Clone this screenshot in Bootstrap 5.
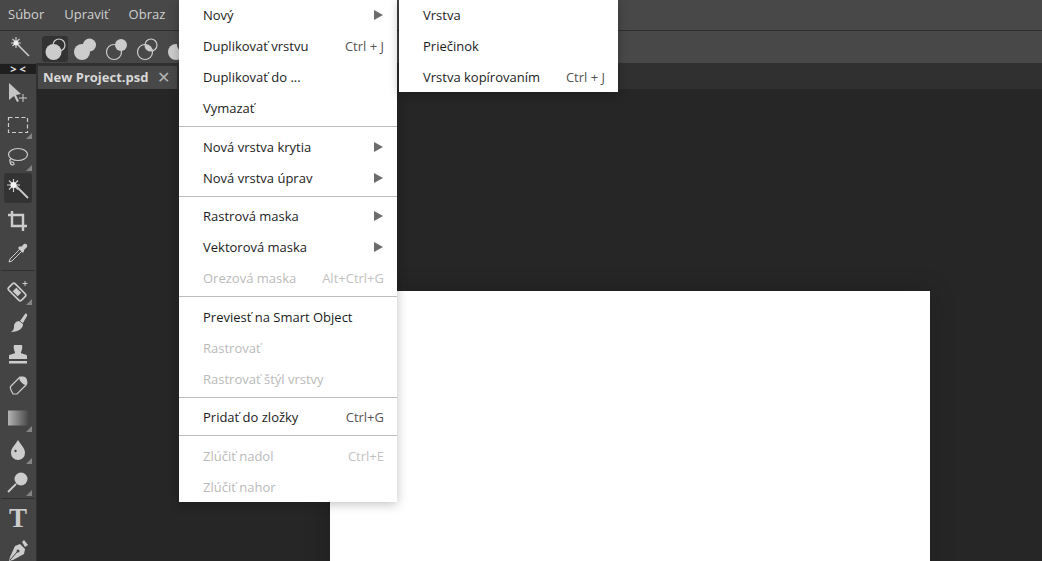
<!doctype html>
<html lang="sk"><head><meta charset="utf-8">
<link href="https://cdn.jsdelivr.net/npm/bootstrap@5.3.0/dist/css/bootstrap.min.css" rel="stylesheet">
<style>
html,body{height:100%;margin:0;overflow:hidden}
body{background:#262626;font-family:"Open Sans",sans-serif;font-size:13px;color:#111;position:relative}
.shell{height:561px;width:1042px;overflow:hidden}
.menubar{height:31px;background:#484848;border-bottom:1px solid #2e2e2e;color:#d0d0d0;padding-left:8px;gap:20px;line-height:29px;font-size:13px}
.optbar{height:32px;background:#484848;gap:5px;padding:4px 0 0 11px}
.optic{width:26px;height:26px;border-radius:3px;flex:none}
.optic.on{background:#333}
.optic svg{display:block}
.workrow{height:498px}
.lefttools{width:37px;background:#444;border-right:1px solid #303030;flex:none;padding-top:1px}
.arrows{height:10px;background:#1f1f1f;color:#e8e8e8;font-size:11px;line-height:9px;font-weight:700;text-align:center;letter-spacing:3px;padding-left:3px;margin-bottom:5px}
.toolslot{width:28px;height:28px;margin:0 auto 4px;border-radius:3px;display:flex;align-items:center;justify-content:center;position:relative}
.toolsep ~ .toolslot{margin-bottom:3.750px}
.toolslot.on{background:#333;height:30px;margin-top:-2px}
.toolslot.more::after{content:"";position:absolute;right:0;bottom:0;border-style:solid;border-width:0 0 6px 6px;border-color:transparent transparent #858585 transparent}
.toolsep{height:1px;background:#303030;margin:-1px 1px 6px}
.toolglyph{font-family:"Liberation Serif",serif;font-size:27px;line-height:26px;font-weight:700;color:#ccc;margin-top:-2px}
.tabstrip{height:26px;background:#303030;padding:3px 0 0 1px}
.doctab{height:23px;background:#484848;color:#d8d8d8;font-weight:700;font-size:13px;line-height:23px;padding:0 7px 0 5px;width:139px}
.docclose{color:#b5b5b5;font-size:16px;font-weight:400}
.stage{flex:1;position:relative;background:#262626;overflow:hidden}
.paper{position:absolute;left:293px;top:202px;width:600px;height:400px;background:#fff;box-shadow:0 0 24px rgba(0,0,0,.2)}
.popmenu{position:absolute;background:#fff;box-shadow:0 2px 10px rgba(0,0,0,.25);z-index:5}
.popmain{left:179px;top:0;width:218px}
.popsub{left:399px;top:0;width:219px;height:92px}
.mrow{height:31px;line-height:30px;padding:0 13px 0 24px;white-space:nowrap;color:#1c1c1c}
.mrow.off{color:#bababa}
.mrow.tailrow{height:30px}
.mkey{color:#555;font-size:13px}
.mrow.off .mkey{color:#c2c2c2}
.marr{width:0;height:0;border-style:solid;border-width:5px 0 5px 9px;border-color:transparent transparent transparent #6c6c6c;margin:10px 1px 0 0}
.msep{height:1px;background:#bcbcbc;margin:2px 0 4.500px}
</style></head>
<body>
<div class="shell d-flex flex-column">
  <div class="menubar d-flex"><span>Súbor</span><span>Upraviť</span><span>Obraz</span></div>
  <div class="optbar d-flex align-items-center">
    <div class="optic"><svg width="26" height="26" viewBox="0 0 26 26"><g stroke="#ccc" fill="none"><path d="M7 9 18 20" stroke-width="1.600"/><path d="M0 7h10M5 1v11M1.500 3l7 7M8.500 3l-7 7" stroke-width="1.200"/></g><circle cx="5" cy="7" r="2.500" fill="#eee"/></svg></div>
    <div class="optic on"><svg width="26" height="26" viewBox="0 0 26 26"><circle cx="17" cy="9" r="6" fill="none" stroke="#ccc" stroke-width="1.200"/><circle cx="11.500" cy="16" r="8" fill="#ccc"/></svg></div>
    <div class="optic"><svg width="26" height="26" viewBox="0 0 26 26" fill="#ccc"><circle cx="16.500" cy="9" r="6.500"/><circle cx="9" cy="16" r="8"/></svg></div>
    <div class="optic"><svg width="26" height="26" viewBox="0 0 26 26"><circle cx="17" cy="9" r="6" fill="#ccc"/><circle cx="10" cy="16" r="7.500" fill="none" stroke="#ccc" stroke-width="1.200"/></svg></div>
    <div class="optic"><svg width="26" height="26" viewBox="0 0 26 26"><defs><clipPath id="lensclip"><circle cx="16" cy="9" r="6"/></clipPath></defs><circle cx="16" cy="9" r="6" fill="none" stroke="#ccc" stroke-width="1.200"/><circle cx="10" cy="16" r="7.500" fill="none" stroke="#ccc" stroke-width="1.200"/><circle cx="10" cy="16" r="7.500" fill="#ccc" clip-path="url(#lensclip)"/></svg></div>
    <div class="optic"><svg width="26" height="26" viewBox="0 0 26 26"><circle cx="10" cy="16" r="8" fill="#ccc"/><circle cx="17" cy="9" r="6" fill="#484848"/></svg></div>
  </div>
  <div class="d-flex workrow">
    <div class="lefttools">
      <div class="arrows">&gt;&lt;</div>
      <div class="toolslot"><svg width="22" height="22" viewBox="0 0 22 22"><path d="M2 1 14 12 9 13l3 6-2 1-3-6-5 4Z" fill="#c4c4c4"/><path d="M12 16h8M16 12v8" stroke="#ccc" fill="none"/></svg></div>
      <div class="toolslot more"><svg width="22" height="18" viewBox="0 0 22 18"><rect x="1.500" y="1.500" width="19" height="15" fill="none" stroke="#ccc" stroke-width="1.200" stroke-dasharray="4 2.500"/></svg></div>
      <div class="toolslot more"><svg width="22" height="20" viewBox="0 0 22 20"><ellipse cx="11" cy="7.500" rx="9.500" ry="6" fill="none" stroke="#ccc" stroke-width="1.200"/><path d="M4 11c-2 2-1 7 2 7 2 0 1-4-2-3" fill="none" stroke="#ccc" stroke-width="1.200"/></svg></div>
      <div class="toolslot on"><svg width="24" height="24" viewBox="0 0 24 24"><g stroke="#ccc" fill="none"><path d="M9 9 22 22" stroke-width="1.800"/><path d="M1 9h13M7.500 3v13M3 4.500l9 9M12 4.500l-9 9" stroke-width="1.200"/></g><circle cx="7.500" cy="9" r="3" fill="#f2f2f2"/></svg></div>
      <div class="toolslot"><svg width="22" height="22" viewBox="0 0 22 22" fill="none" stroke="#ccc" stroke-width="2.400"><path d="M5 1v15h15M1 5h15v16"/></svg></div>
      <div class="toolslot"><svg width="22" height="22" viewBox="0 0 22 22"><path d="M13 7 3 17l-1 3 3-1L15 9Z" fill="none" stroke="#ccc"/><path d="M11 6l5 5 1-2 0-1 3-3c1-2-1-4-3-3l-3 3-1-1Z" fill="#ccc"/></svg></div>
      <div class="toolsep"></div>
      <div class="toolslot more"><svg width="22" height="22" viewBox="0 0 22 22"><g transform="rotate(45 10 12)"><rect x="1" y="7.500" width="18" height="9" rx="2" fill="none" stroke="#ccc" stroke-width="1.700"/><rect x="6.500" y="9.500" width="7" height="5" fill="#ccc"/></g><path d="M18 1v5M15.500 3.500h5" stroke="#ccc"/></svg></div>
      <div class="toolslot"><svg width="22" height="22" viewBox="0 0 22 22" fill="#ccc"><path d="M13 9 18 2c1-1 3 0 2 2l-4 7Z"/><path d="M12 9l4 3c0 4-4 8-12 8 3-2 3-4 3-6s2-5 5-5Z"/></svg></div>
      <div class="toolslot"><svg width="22" height="22" viewBox="0 0 22 22" fill="#ccc"><path d="M7 1h8c1 4-1 6-1 8 0 1 6 1 6 3v3H2v-3c0-2 6-2 6-3 0-2-2-4-1-8Z"/><rect x="2" y="17" width="18" height="2.500"/></svg></div>
      <div class="toolslot"><svg width="22" height="22" viewBox="0 0 22 22"><path d="M13 2 4 11c-1 1-1 2 0 4l2 4h4l9-9c2-3 0-8-3-8Z" fill="none" stroke="#ccc" stroke-width="1.200"/><path d="M13 2c-1 1-1 3 1 5s3 3 5 3c2-3 0-8-3-8Z" fill="#ccc"/></svg></div>
      <div class="toolslot more"><svg width="22" height="16" viewBox="0 0 22 16"><defs><linearGradient id="gr"><stop offset="0" stop-color="#b4b4b4"/><stop offset="1" stop-color="#4a4a4a"/></linearGradient></defs><rect x="1" y="0.500" width="20" height="15" fill="url(#gr)"/></svg></div>
      <div class="toolslot more"><svg width="22" height="22" viewBox="0 0 22 22"><path d="M11 1c3 5 7 8 7 13a7 7 0 0 1-14 0c0-5 4-8 7-13Z" fill="#ccc"/><circle cx="8.500" cy="12" r="1.200" fill="#444"/></svg></div>
      <div class="toolslot more"><svg width="22" height="22" viewBox="0 0 22 22"><circle cx="14" cy="8" r="6.500" fill="#ccc"/><path d="M9 13 1 21" stroke="#ccc" stroke-width="1.800"/></svg></div>
      <div class="toolsep"></div>
      <div class="toolslot"><span class="toolglyph">T</span></div>
      <div class="toolslot"><svg width="22" height="22" viewBox="0 0 22 22"><path d="M17 0l4 5-3 2-3-5Z" fill="#ccc"/><path d="M13 4l5 5-1 5-11 6-4 1 1-4 5-11Z" fill="#ccc"/><path d="M3 20 10 12" stroke="#444"/><circle cx="11" cy="11" r="1.500" fill="#444"/></svg></div>
    </div>
    <div class="d-flex flex-column flex-grow-1">
      <div class="tabstrip d-flex"><div class="doctab d-flex justify-content-between"><span>New Project.psd</span><span class="docclose">✕</span></div></div>
      <div class="stage"><div class="paper"></div></div>
    </div>
  </div>
</div>
<div class="popmenu popmain">
  <div class="mrow d-flex justify-content-between"><span>Nový</span><i class="marr"></i></div>
  <div class="mrow d-flex justify-content-between"><span>Duplikovať vrstvu</span><span class="mkey">Ctrl + J</span></div>
  <div class="mrow">Duplikovať do ...</div>
  <div class="mrow">Vymazať</div>
  <div class="msep"></div>
  <div class="mrow d-flex justify-content-between"><span>Nová vrstva krytia</span><i class="marr"></i></div>
  <div class="mrow d-flex justify-content-between"><span>Nová vrstva úprav</span><i class="marr"></i></div>
  <div class="msep"></div>
  <div class="mrow d-flex justify-content-between"><span>Rastrová maska</span><i class="marr"></i></div>
  <div class="mrow d-flex justify-content-between"><span>Vektorová maska</span><i class="marr"></i></div>
  <div class="mrow off d-flex justify-content-between"><span>Orezová maska</span><span class="mkey">Alt+Ctrl+G</span></div>
  <div class="msep"></div>
  <div class="mrow">Previesť na Smart Object</div>
  <div class="mrow off">Rastrovať</div>
  <div class="mrow off">Rastrovať štýl vrstvy</div>
  <div class="msep"></div>
  <div class="mrow d-flex justify-content-between"><span>Pridať do zložky</span><span class="mkey">Ctrl+G</span></div>
  <div class="msep"></div>
  <div class="mrow off d-flex justify-content-between"><span>Zlúčiť nadol</span><span class="mkey">Ctrl+E</span></div>
  <div class="mrow off tailrow">Zlúčiť nahor</div>
</div>
<div class="popmenu popsub">
  <div class="mrow">Vrstva</div>
  <div class="mrow">Priečinok</div>
  <div class="mrow d-flex justify-content-between"><span>Vrstva kopírovaním</span><span class="mkey">Ctrl + J</span></div>
</div>
<script src="https://cdn.jsdelivr.net/npm/bootstrap@5.3.0/dist/js/bootstrap.bundle.min.js"></script>
</body></html>
